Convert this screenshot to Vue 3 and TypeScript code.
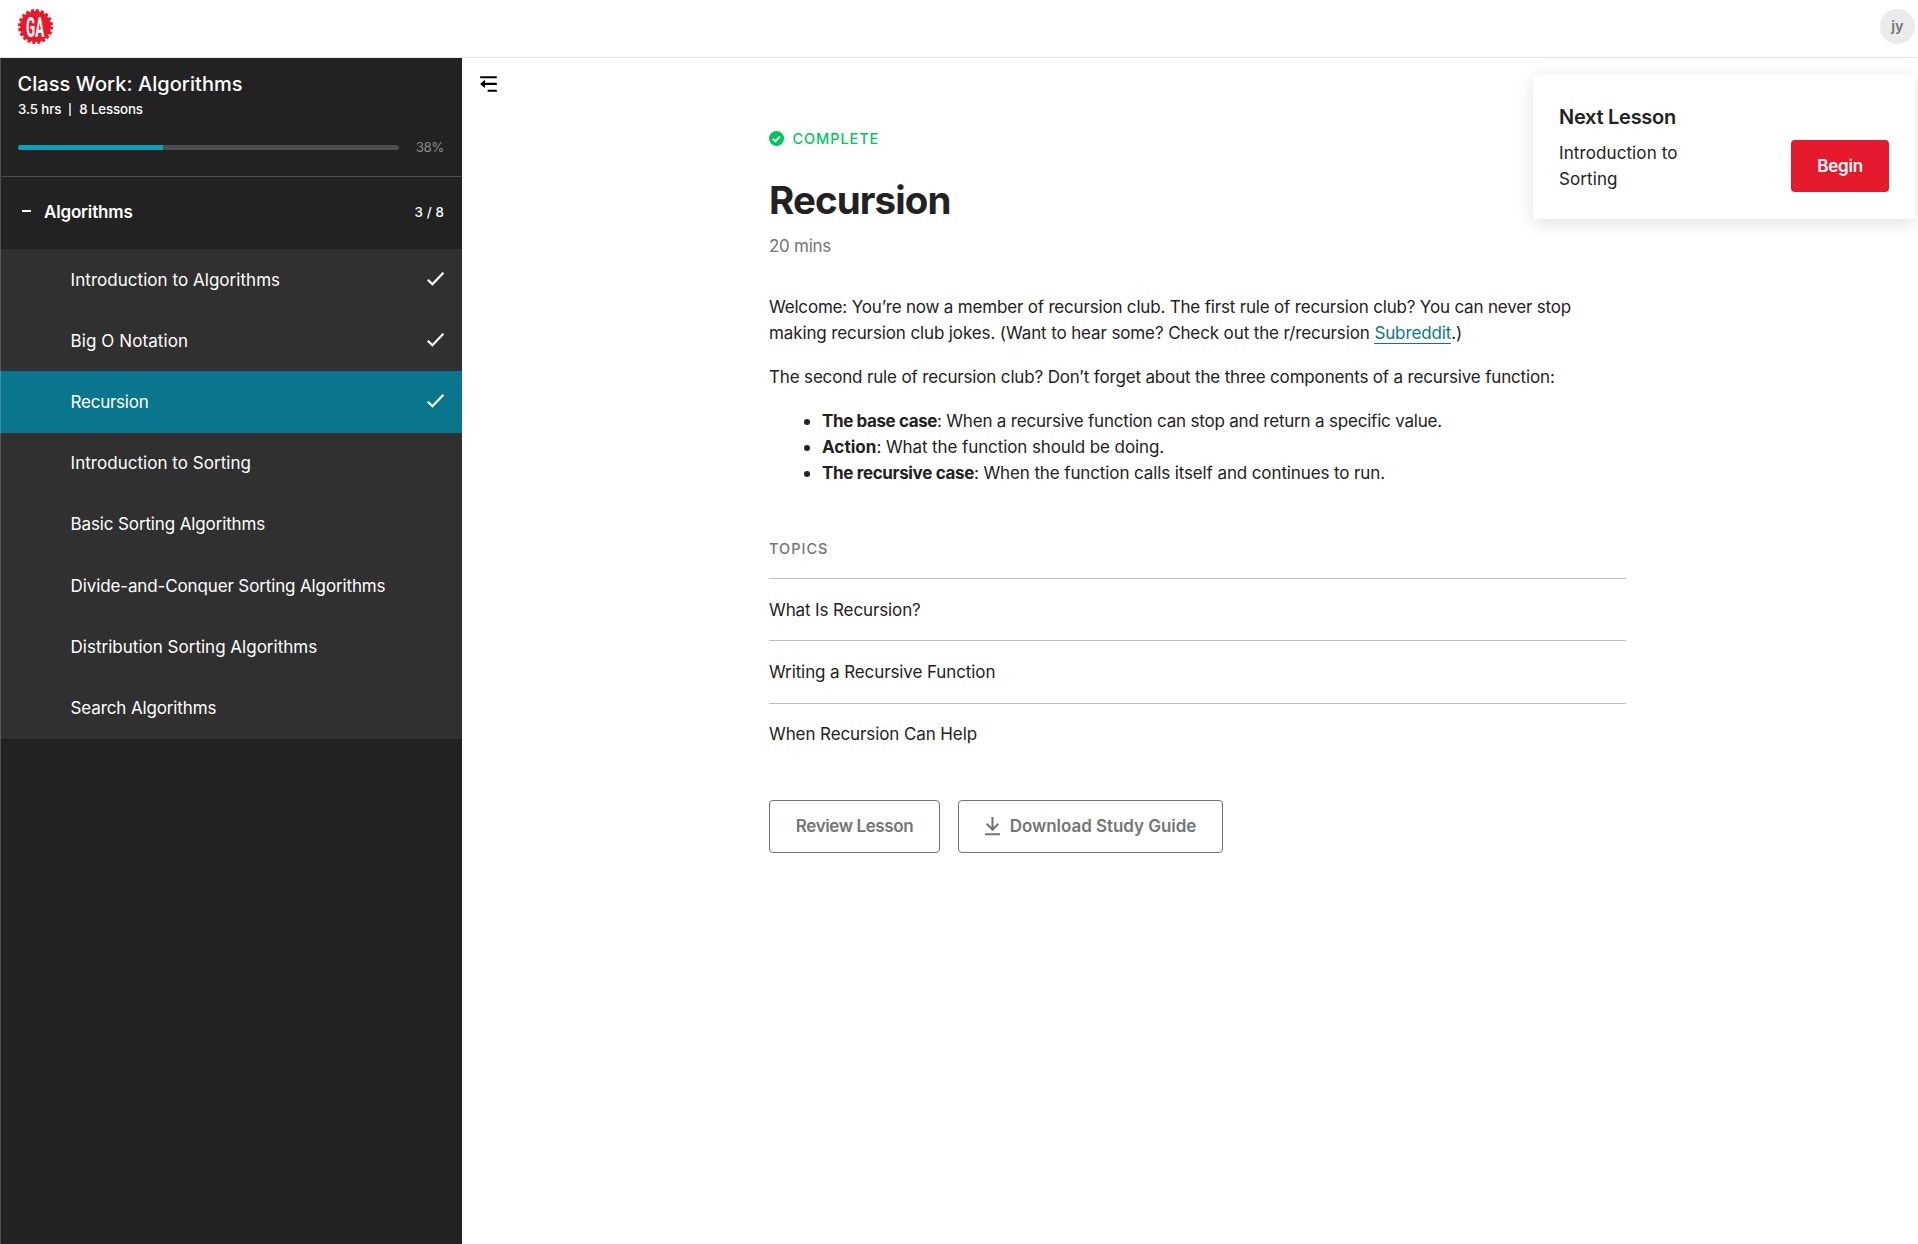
<script setup lang="ts">
interface Row {
  title: string
  tracking: number
  done?: boolean
  active?: boolean
}

const lessons: Row[] = [
  { title: 'Introduction to Algorithms', tracking: 0.04, done: true },
  { title: 'Big O Notation', tracking: 0.08, done: true },
  { title: 'Recursion', tracking: -0.25, done: true, active: true },
  { title: 'Introduction to Sorting', tracking: 0.03 },
  { title: 'Basic Sorting Algorithms', tracking: -0.13 },
  { title: 'Divide-and-Conquer Sorting Algorithms', tracking: -0.13 },
  { title: 'Distribution Sorting Algorithms', tracking: 0.01 },
  { title: 'Search Algorithms', tracking: -0.13 },
]

const topics: Row[] = [
  { title: 'What Is Recursion?', tracking: -0.12 },
  { title: 'Writing a Recursive Function', tracking: -0.1 },
  { title: 'When Recursion Can Help', tracking: -0.1 },
]

const parts = [
  { name: 'The base case', nameTracking: -0.4, text: ': When a recursive function can stop and return a specific value.', tracking: -0.197 },
  { name: 'Action', nameTracking: 0.05, text: ': What the function should be doing.', tracking: -0.1 },
  { name: 'The recursive case', nameTracking: -0.34, text: ': When the function calls itself and continues to run.', tracking: -0.116 },
]

const progress = 38
const track = (n: number) => ({ letterSpacing: n + 'px' })
</script>

<template>
  <div class="app">
    <header class="topbar">
      <svg class="logo" width="35" height="35" viewBox="0 0 35 35">
        <circle cx="17.5" cy="17.5" r="15.5" fill="#e51b2d" />
        <circle cx="17.5" cy="17.5" r="16" fill="none" stroke="#e51b2d" stroke-width="3" stroke-dasharray="3 2.0265" />
        <text transform="translate(8 27.6) scale(0.48 1)" font-family="Roboto, sans-serif" font-weight="700" font-size="28" fill="#fff">GA</text>
      </svg>
      <div class="avatar">jy</div>
    </header>
    <div class="body">
      <aside class="sidebar">
        <div class="course">
          <h2>Class Work: Algorithms</h2>
          <p class="meta"><span>3.5 hrs</span><i></i><span class="count">8 Lessons</span></p>
          <div class="progress">
            <div class="track"><div class="fill" :style="{ width: progress + '%' }"></div></div>
            <span>{{ progress }}%</span>
          </div>
        </div>
        <div class="unit">
          <b class="minus"></b>
          <strong>Algorithms</strong>
          <em>3 / 8</em>
        </div>
        <ul class="lessons">
          <li v-for="l in lessons" :key="l.title" :class="{ active: l.active }">
            <span :style="track(l.tracking)">{{ l.title }}</span>
            <svg v-if="l.done" width="17" height="14" viewBox="0 0 17 14"><path d="M.8 7.8 5.4 12.3 16.4 .8" fill="none" stroke="#fff" stroke-width="2.2" /></svg>
          </li>
        </ul>
      </aside>
      <main class="main">
        <svg class="collapse" width="17" height="16" viewBox="0 0 17 16">
          <path d="M1 1.2H16M4 7.9H16M8.5 14.8H16" fill="none" stroke="#000" stroke-width="2.1" stroke-linecap="round" />
          <path d="M0 7.9 5 3.8V12Z" />
        </svg>
        <article class="lesson">
          <div class="status">
            <svg width="15" height="15" viewBox="0 0 15 15">
              <circle cx="7.5" cy="7.5" r="7.5" fill="#00c65e" />
              <path d="M3.9 7.7 6.5 10.2 11.1 5.3" fill="none" stroke="#fff" stroke-width="1.9" />
            </svg>
            <span>COMPLETE</span>
          </div>
          <h1>Recursion</h1>
          <p class="time">20 mins</p>
          <p class="intro">
            <span class="line-a">Welcome: You’re now a member of recursion club. The first rule of recursion club? You can never stop</span><br />
            <span class="line-b">making recursion club jokes. (Want to hear some? Check out the r/recursion <a>Subreddit</a>.)</span>
          </p>
          <p class="second">The second rule of recursion club? Don’t forget about the three components of a recursive function:</p>
          <ul class="parts">
            <li v-for="p in parts" :key="p.name"><b :style="track(p.nameTracking)">{{ p.name }}</b><span :style="track(p.tracking)">{{ p.text }}</span></li>
          </ul>
          <h3>TOPICS</h3>
          <ul class="topics">
            <li v-for="t in topics" :key="t.title"><span :style="track(t.tracking)">{{ t.title }}</span></li>
          </ul>
          <div class="actions">
            <button class="review">Review Lesson</button>
            <button class="download">
              <svg width="15" height="19" viewBox="0 0 15 19"><path d="M7.5 0V13M1.7 6.8 7.5 12.8 13.3 6.8M0 17.2H15" fill="none" stroke="#757575" stroke-width="2.1" /></svg>
              <span>Download Study Guide</span>
            </button>
          </div>
        </article>
        <section class="next">
          <h4>Next Lesson</h4>
          <div class="next-row">
            <p>Introduction to<br />Sorting</p>
            <button>Begin</button>
          </div>
        </section>
      </main>
    </div>
  </div>
</template>

<style>
body { margin: 0; }
</style>

<style scoped>
* { box-sizing: border-box; margin: 0; padding: 0; }
.app { font: 400 17px/26px Inter, "Liberation Sans", sans-serif; color: #222; height: 1244px; display: flex; flex-direction: column; overflow: hidden; background: #fff; }
.app span, .app p, .app b { white-space: nowrap; }
ul { list-style: none; }

.topbar { height: 58px; border-bottom: 1px solid #e7e7e7; padding: 9px 3px 0 18px; display: flex; justify-content: space-between; align-items: flex-start; }
.avatar { width: 35px; height: 35px; border-radius: 50%; background: #ebebeb; color: #757575; font-size: 14.5px; font-weight: 600; line-height: 33px; text-align: center; }

.body { flex: 1; display: flex; position: relative; }
.sidebar { width: 462px; background: #222; color: #fff; box-shadow: inset 1px 0 rgba(255, 255, 255, 0.2); }
.course { height: 119px; padding: 12px 18px 0; border-bottom: 1px solid #4d4d4d; }
h2 { font-size: 20px; line-height: 28px; font-weight: 500; letter-spacing: 0.06px; margin-left: -0.5px; }
.meta { font-size: 13.3px; line-height: 23px; font-weight: 450; display: flex; align-items: center; }
.meta span:first-child { letter-spacing: -0.1px; }
.meta i { width: 2px; height: 13px; background: #bbb; margin: 0 8px; }
.meta .count { letter-spacing: -0.13px; }
.progress { display: flex; align-items: center; justify-content: space-between; margin-top: 16.5px; height: 20px; font-size: 13.3px; color: #8a8a8a; }
.progress span { letter-spacing: -0.4px; padding-bottom: 1.5px; }
.track { width: 381px; height: 5px; border-radius: 3px; background: #4d4d4d; overflow: hidden; }
.fill { height: 5px; background: #0aa1bb; }
.unit { height: 72px; padding: 0 18px 2px 22px; display: flex; align-items: center; }
.minus { width: 9px; height: 2px; background: #fff; margin: 0 13px 2px 0; }
strong { font-weight: 600; letter-spacing: -0.17px; flex: 1; }
em { font-style: normal; font-size: 13.3px; font-weight: 450; letter-spacing: 0.16px; }
.lessons li { height: 61.2px; background: #303030; display: flex; align-items: center; justify-content: space-between; padding: 0 18px 0 70.6px; box-shadow: inset 1px 0 rgba(255, 255, 255, 0.2); }
.lessons svg { margin-bottom: 2px; }
.lessons .active { background: #0a768e; }

.main { flex: 1; padding: 18px 0 0 18px; }
.collapse { display: block; }
.lesson { margin: 35px 0 0 289px; width: 857px; }
.status { display: flex; align-items: center; gap: 8.5px; height: 23px; color: #00c65e; font-size: 14.5px; font-weight: 500; letter-spacing: 0.9px; }
h1 { font-size: 38.5px; line-height: 48px; font-weight: 700; letter-spacing: -0.9px; margin-top: 26px; }
.time { margin-top: 9px; color: #757575; letter-spacing: -0.27px; }
.intro { margin-top: 35px; }
.line-a { letter-spacing: -0.185px; }
.line-b { letter-spacing: -0.12px; }
.second { margin-top: 18px; letter-spacing: -0.163px; }
a { color: #0a768e; border-bottom: 1px solid #0a768e; }
.parts { margin: 18px 0 0 53px; }
.parts li { display: flex; align-items: center; }
.parts li::before { content: ""; width: 6px; height: 6px; border-radius: 50%; background: #222; margin: 1px 12px 0 -18px; }
.parts b { font-weight: 700; }
h3 { margin-top: 52px; font-size: 14.5px; line-height: 22px; color: #757575; font-weight: 500; letter-spacing: 1px; }
.topics { margin-top: 18px; }
.topics li { height: 62.4px; border-top: 1px solid #bfbfbf; display: flex; align-items: center; }

.actions { margin-top: 35px; display: flex; gap: 18px; }
button { font: inherit; font-weight: 600; height: 53px; color: #757575; background: #fff; border: 1px solid #757575; border-radius: 4px; display: flex; align-items: center; justify-content: center; gap: 10px; padding-bottom: 1px; }
.review { width: 171px; letter-spacing: -0.4px; }
.download { width: 265px; letter-spacing: -0.05px; }

.next { position: absolute; left: 1533px; top: 17px; width: 382px; height: 144px; background: #fff; border-radius: 3px; box-shadow: 0 4px 18px rgba(0, 0, 0, 0.12); padding: 28px 26px 0; }
h4 { font-size: 20px; line-height: 28px; font-weight: 600; letter-spacing: -0.27px; }
.next-row { display: flex; justify-content: space-between; padding-top: 9px; }
.next-row p { letter-spacing: 0.1px; }
.next button { width: 98px; height: 52px; background: #e51b2d; color: #fff; border: 0; padding: 0; letter-spacing: -0.2px; }
</style>
